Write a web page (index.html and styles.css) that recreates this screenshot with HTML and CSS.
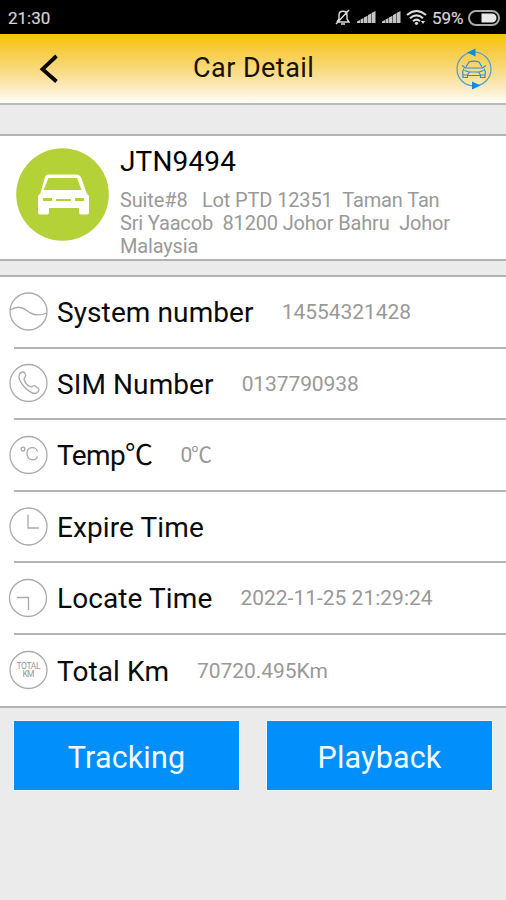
FILE: index.html
```html
<!DOCTYPE html>
<html lang="en">
<head>
<meta charset="utf-8">
<title>Car Detail</title>
<link rel="stylesheet" href="styles.css">
</head>
<body>
<div class="status">
  <span class="clock">21:30</span>
  <svg class="status-icons" width="98" height="20" viewBox="0 0 98 20">
    <g fill="none" stroke="#ddd" stroke-width="1.4"><path d="M3 14h12l-2-3V7c0-5-8-5-8 0v4l-2 3M7 16h4M15 2L2 16"/></g>
    <g fill="#c4c4c4"><path d="M23 15v-1.500l3-1.600V15zM26.500 15v-3.500l3-1.600V15zM30 15V9.500l3.500-1.800V15zM34 15V7l3-1.500V15zM37.500 15V5L41.500 3v12z"/><path d="M48 15v-1.500l3-1.600V15zM51.500 15v-3.500l3-1.600V15zM55 15V9.500l3.500-1.800V15zM59 15V7l3-1.500V15zM62.500 15V5L66.500 3v12z"/></g>
    <g fill="none" stroke="#ddd" stroke-width="2.100"><path d="M73 7q9.500-8 19 0M76 10.200q6.500-5.500 13 0M79 13.200q3.500-3 7 0"/></g>
    <circle cx="82.500" cy="15.300" r="1.600" fill="#ddd"/><path d="M87 13l2 3 2-3z" fill="#ddd"/>
  </svg>
  <span class="percent">59%</span>
  <svg class="battery" width="32" height="16" viewBox="0 0 32 16"><rect x="1" y="1" width="30" height="14" rx="7" fill="none" stroke="#aaa" stroke-width="2"/><path d="M13.500 3.500H24a4.500 4.500 0 0 1 0 9H13.500z" fill="#e8e8e8"/></svg>
</div>
<header class="header">
  <svg class="back" width="20" height="32" viewBox="0 0 20 32"><path d="M18.500 3L4.500 16.200l14 12.300" fill="none" stroke="#090600" stroke-width="3.800"/></svg>
  <h1 class="title">Car Detail</h1>
  <svg class="switch" width="38" height="42" viewBox="0 0 38 42" fill="none" stroke="#2891da" stroke-width="1.200">
    <circle cx="19" cy="21" r="17" stroke="#4e9fc9"/>
    <path d="M20.500 .5v8l-8.500-4zM17 33.500v8l8.500-4z" fill="#078bf0" stroke="none"/>
    <path d="M11 19l3-5q5-1.800 10 0l3 5M7 17.500l3.500 2.500h17l3.500-2.500M9 20.500q-2 3-1 6.500h4.500l2-3h9l2 3H30q1-3.500-1-6.500M9.500 22.500l4.500 1.500M28.500 22.500L24 24M13 27.500h12M8 27v2.500h4.500V27M25.500 27v2.500H30V27"/>
  </svg>
</header>
<section class="car">
  <svg class="avatar" width="94" height="94" viewBox="0 0 94 94">
    <circle cx="47.500" cy="46.500" r="46.300" fill="#b5d138"/>
    <path transform="translate(0 -1)" fill="#fff" fill-rule="evenodd" d="M33 27.500h28q4 0 5.500 4l5 14.500 2.500 3v16.500q0 2-2 2h-6q-2 0-2-2V61H34v4.500q0 2-2 2h-7q-2 0-2-2V49l2.500-3 4-14.500q1-4 3.500-4zM33.500 31l-5 12h38l-4.500-12zM28 51v3h9v-3zM41 52v2h15v-2zM60 51v3h9v-3z"/>
  </svg>
  <div class="info">
    <h2 class="plate">JTN9494</h2>
    <p class="address"><span class="a1">Suite#8 &nbsp; Lot PTD 12351 &nbsp;Taman Tan</span><span class="a2">Sri Yaacob &nbsp;81200 Johor Bahru &nbsp;Johor</span><span class="a3">Malaysia</span></p>
  </div>
</section>
<section class="list">
  <div class="row"><svg class="icon" viewBox="0 0 40 40"><circle cx="20.500" cy="19.500" r="18.500"/><path d="M2 18c5-3 11-4 16 0s10 7 21 3"/></svg><span class="label l1">System number</span><span class="value v1">14554321428</span></div>
  <div class="row"><svg class="icon" viewBox="0 0 40 40"><circle cx="20.500" cy="20" r="18.500"/><path d="M11.500 11c2-3 5-2.500 6 .5 1 2-1 3-1.500 4.500 1 4 4 7 7.500 8 1.500-1.500 3-2 4.500-.5l2.500 2c1.500 2-1 4.500-3.500 5-3 0-7-2.500-11-7s-6-9-4.500-12.500z"/></svg><span class="label l2">SIM Number</span><span class="value v2">0137790938</span></div>
  <div class="row"><svg class="icon" viewBox="0 0 40 40"><circle cx="20.500" cy="20" r="18.500"/><circle cx="15" cy="14" r="1.900"/><path d="M29.500 16.500c-1-5.500-10.500-5.500-10.500 2s9.500 8 10.500 3"/></svg><span class="label l3">Temp℃</span><span class="value v3">0℃</span></div>
  <div class="row"><svg class="icon" viewBox="0 0 40 40"><circle cx="20.500" cy="20.500" r="18.500"/><path d="M20 8.500v13.500h11"/></svg><span class="label l4">Expire Time</span></div>
  <div class="row"><svg class="icon" viewBox="0 0 40 40"><circle cx="20" cy="20" r="18.500"/><path d="M9 19.500h11.500V32"/></svg><span class="label l5">Locate Time</span><span class="value v5">2022-11-25 21:29:24</span></div>
  <div class="row"><svg class="icon" viewBox="0 0 40 40"><circle cx="20.500" cy="20" r="18.500"/><text x="20.500" y="18.500" textLength="24">TOTAL</text><text x="20.500" y="27" textLength="12">KM</text></svg><span class="label l6">Total Km</span><span class="value v6">70720.495Km</span></div>
</section>
<div class="actions">
  <button class="button"><span class="b1">Tracking</span></button>
  <button class="button"><span class="b2">Playback</span></button>
</div>
</body>
</html>
```
FILE: styles.css
```css
* { box-sizing: border-box; }
body { margin: 0; height: 900px; background: #ebebeb; font-family: Roboto, "Noto Sans CJK SC", sans-serif; overflow: hidden; }
h1, h2, p { margin: 0; font-weight: 400; }
span { white-space: pre; }
.status { height: 34px; background: #000; display: flex; align-items: center; padding: 2px 6px 0 8px; color: #d5d5d5; }
.clock { font-size: 17px; -webkit-text-stroke: .2px; }
.status-icons { margin-left: auto; }
.percent { font-size: 17px; width: 36px; -webkit-text-stroke: .2px; }
.battery { flex: none; }
.header { height: 71px; border-bottom: 2px solid #b9b9b9; background: linear-gradient(#f8c500 0, #f7ca3c 14px, #f8d878 34px, #fceabd 53px, #fffdf5 68px); display: flex; align-items: center; padding: 0 13px 0 38px; }
.back { margin-top: 1px; }
.title { flex: 1; font-size: 27px; letter-spacing: .45px; line-height: 32px; padding-left: 135px; color: #181203; margin-top: -2px; }
.car { margin-top: 29px; height: 127px; border: solid #b3b3b3; border-width: 2px 0; background: #fff; display: flex; padding: 12px 0 0 15px; }
.avatar { flex: none; }
.info { padding-left: 11px; }
.plate { font-size: 28px; letter-spacing: .15px; line-height: 32px; margin-top: -2px; }
.address { font-size: 20px; letter-spacing: -.17px; line-height: 23px; color: #999; margin-top: 11px; }
.address span { display: table; }
.a1 { letter-spacing: -.14px; }
.list { margin-top: 14px; height: 433px; border: solid #b3b3b3; border-width: 2px 0; background: #fff; display: grid; grid-template-rows: repeat(6, 1fr); }
.row { display: flex; align-items: center; margin-left: 14px; border-bottom: 2px solid #b5b5b5; color: #0b0b0b; }
.row:last-child { border-bottom: 0; }
.icon { width: 40px; height: 40px; flex: none; margin-left: -6px; fill: none; stroke: #aaa; stroke-width: 1.300; }
.icon text { fill: #999; stroke: none; font-size: 8.500px; text-anchor: middle; }
.label { font-size: 28px; letter-spacing: .1px; line-height: 34px; margin: 3px 0 0 9px; flex: none; }
.l3 { letter-spacing: -.6px; }
.value { font-size: 21px; line-height: 28px; margin: 1px 0 0 28px; color: #999; }
.v1 { letter-spacing: -.05px; }
.v2 { letter-spacing: -.1px; }
.v3 { letter-spacing: -1.200px; }
.v6 { letter-spacing: -.05px; }
.actions { display: grid; grid-template-columns: 227px 227px; gap: 26px; padding: 12px 13px 0; }
.button { height: 71px; border: 1px solid #f4f4f2; background: #008ffb; color: #f3f9ff; font-family: inherit; font-size: 30.500px; letter-spacing: .15px; padding: 3px 0 0; }
```
